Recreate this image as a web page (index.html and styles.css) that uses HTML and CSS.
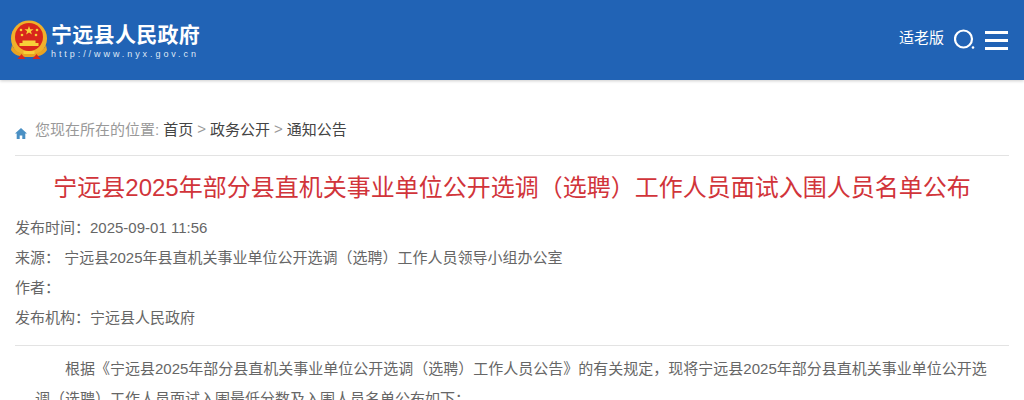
FILE: index.html
```html
<!DOCTYPE html>
<html lang="zh-CN">
<head>
    <meta charset="UTF-8">
    <meta name="viewport" content="width=device-width, initial-scale=1.0">
    <title>宁远县人民政府</title>
    <link rel="stylesheet" href="styles.css">
</head>
<body>
    <header class="header">
        <div class="logo">
            <svg class="emblem" width="38" height="40" viewBox="0 0 38 40">
                <circle cx="19" cy="18.500" r="18" fill="#f0b02a"/>
                <circle cx="19" cy="17" r="14" fill="#d8261c"/>
                <path d="M19 6l1.200 3.200h3.400l-2.700 2 1 3.300-2.900-2-2.900 2 1-3.300-2.700-2h3.400z" fill="#f7d038"/>
                <circle cx="11" cy="10" r="1.300" fill="#f7d038"/>
                <circle cx="27" cy="10" r="1.300" fill="#f7d038"/>
                <circle cx="12" cy="15" r="1.300" fill="#f7d038"/>
                <circle cx="26" cy="15" r="1.300" fill="#f7d038"/>
                <path d="M9.500 26v-3h3v-2.500h13V23h3v3z" fill="#f7d038"/>
                <path d="M2 25c3 7 9 9 17 9s14-2 17-9l1 5c-3 5-8.500 7-18 7S4 35 1 30z" fill="#e9a322"/>
                <path d="M11.500 34l-4 5h8zM26.500 34l4 5h-8z" fill="#d8261c"/>
                <rect x="13.500" y="31" width="11" height="3" fill="#f7d038"/>
            </svg>
            <div class="logo-text">
                <div class="site-name">宁远县人民政府</div>
                <div class="site-url">http://www.nyx.gov.cn</div>
            </div>
        </div>
        <div class="tools">
            <a class="elder">适老版</a>
            <svg class="search" width="21" height="22" viewBox="0 0 21 22">
                <circle cx="9.500" cy="10" r="8.500" fill="none" stroke="#fff" stroke-width="2.200"/>
                <circle cx="19" cy="18.500" r="1.300" fill="#fff"/>
            </svg>
            <div class="menu"><span></span><span></span><span></span></div>
        </div>
    </header>

    <div class="main">
        <div class="crumbs">
            <svg class="home" width="12" height="11" viewBox="0 0 12 11">
                <path d="M6 0L0 5.500h1.700V11h3V7.500h2.600V11h3V5.500H12z" fill="#4a90c4"/>
            </svg>
            <span class="here">您现在所在的位置:</span>
            <a>首页</a><span class="sep">&gt;</span><a>政务公开</a><span class="sep">&gt;</span><a>通知公告</a>
        </div>

        <h1 class="title">宁远县2025年部分县直机关事业单位公开选调（选聘）工作人员面试入围人员名单公布</h1>

        <div class="meta">
            <div class="meta-row">发布时间：2025-09-01 11:56</div>
            <div class="meta-row">来源： 宁远县2025年县直机关事业单位公开选调（选聘）工作人员领导小组办公室</div>
            <div class="meta-row">作者：</div>
            <div class="meta-row">发布机构：宁远县人民政府</div>
        </div>

        <div class="content">
            <p>根据《宁远县2025年部分县直机关事业单位公开选调（选聘）工作人员公告》的有关规定，现将宁远县2025年部分县直机关事业单位公开选调（选聘）工作人员面试入围最低分数及入围人员名单公布如下：</p>
        </div>
    </div>
</body>
</html>
```

FILE: styles.css
```css
* {
    margin: 0;
    padding: 0;
    box-sizing: border-box;
}

body {
    font-family: "Liberation Sans", "Noto Sans CJK SC", sans-serif;
    background: #fff;
    color: #666;
    overflow: hidden;
}

.header {
    height: 80px;
    background: #2163b5;
    display: flex;
    justify-content: space-between;
    align-items: center;
    padding: 0 16px 0 10px;
    box-shadow: 0 1px 3px rgba(0,0,0,0.2);
}

.logo {
    display: flex;
    align-items: center;
    gap: 3px;
}

.site-name {
    color: #fff;
    font-size: 21px;
    font-weight: bold;
    line-height: 26px;
    letter-spacing: 0.300px;
    margin-top: 2px;
}

.site-url {
    color: #dfe8f5;
    font-size: 9px;
    line-height: 12px;
    letter-spacing: 2.930px;
}

.tools {
    display: flex;
    align-items: center;
    gap: 10px;
}

.elder {
    color: #fff;
    font-size: 15px;
    margin-top: -8px;
}

.menu {
    width: 23px;
}

.menu span {
    display: block;
    height: 3px;
    background: #fff;
    margin-bottom: 5px;
}

.menu span:last-child {
    margin-bottom: 0;
}

.main {
    padding: 36px 15px 0;
}

.crumbs {
    display: flex;
    align-items: center;
    font-size: 15px;
    height: 24px;
    color: #444;
}

.home {
    margin-right: 8px;
    margin-top: 11px;
}

.here {
    color: #999;
    margin-right: 4px;
}

.sep {
    color: #999;
    margin: 0 4px;
}

.title {
    margin-top: 15px;
    border-top: 1px solid #e3e3e3;
    padding-top: 16px;
    font-size: 24px;
    font-weight: normal;
    color: #d1343a;
    text-align: center;
    line-height: 32px;
}

.meta {
    margin-top: 9px;
    padding-bottom: 12px;
    border-bottom: 1px solid #e3e3e3;
}

.meta-row {
    font-size: 15px;
    line-height: 30px;
}

.content {
    padding: 8px 22px 0 20px;
    font-size: 15px;
    line-height: 30px;
}

.content p {
    text-indent: 2em;
}
```
